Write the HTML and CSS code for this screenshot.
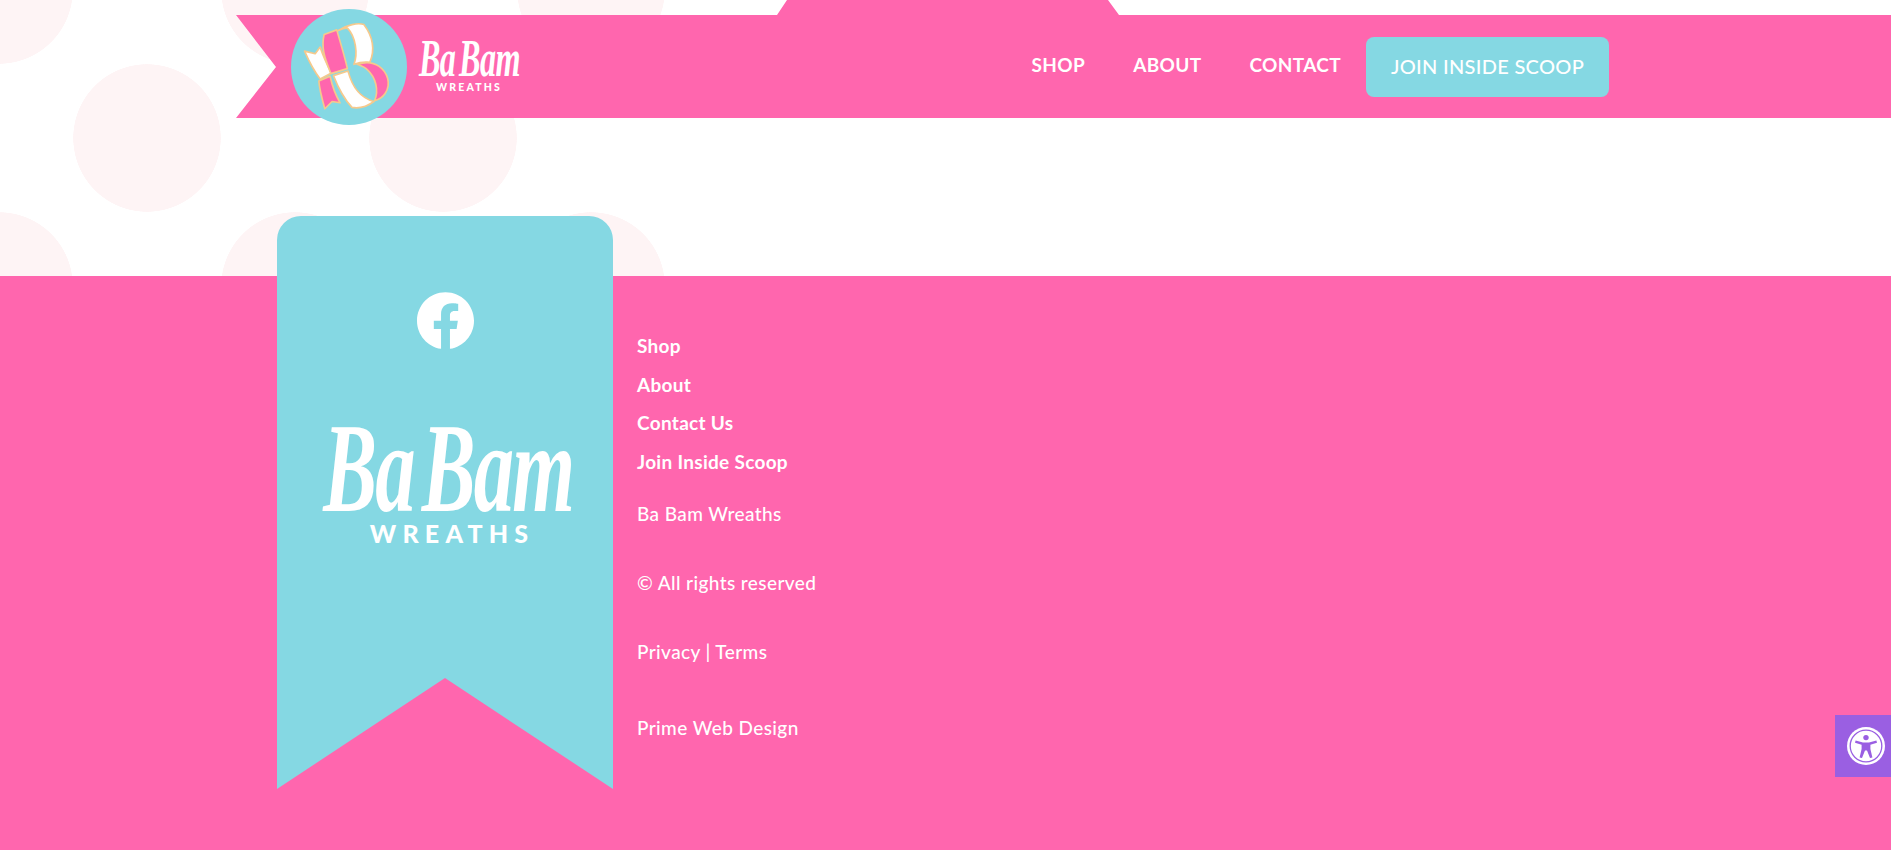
FILE: index.html
```html
<!DOCTYPE html>
<html lang="en">
<head>
  <meta charset="UTF-8" />
  <meta name="viewport" content="width=device-width, initial-scale=1.0"/>
  <title>Ba Bam Wreaths</title>
  <link rel="stylesheet" href="styles.css">
</head>
<body>

  <div class="top">
    <div class="dots"></div>

    <header class="header">
      <a class="brand" href="#">
        <svg class="brand-mark" viewBox="62 25 350 350" aria-hidden="true">
          <circle cx="237" cy="200" r="175" fill="#85d8e3"/>
          <g stroke="#f6c98c" stroke-width="5" stroke-linejoin="round">
            <path fill="#fff" d="M103 152 L135 160 L150 140 C160 170 172 195 184 218 L150 236 C130 210 115 180 103 152 Z"/>
            <path fill="#ff66ae" d="M162 102 L200 88 C212 130 226 175 232 205 L182 220 C172 190 150 150 162 102 Z"/>
            <path fill="#fff" d="M205 90 C230 72 265 66 282 72 C310 110 315 150 300 186 C285 184 268 186 252 192 C264 160 258 110 232 82 C224 82 212 86 205 90 Z"/>
            <path fill="#ff66ae" d="M262 192 C285 184 310 186 328 198 C352 215 366 250 346 280 C338 292 328 298 314 302 C328 270 318 232 292 208 C284 200 272 196 262 192 Z"/>
            <path fill="#fff" d="M190 226 L234 212 C244 250 262 290 312 304 C296 316 270 326 246 322 C222 296 204 262 190 226 Z"/>
            <path fill="#ff66ae" d="M146 242 L180 228 C186 256 196 284 210 308 L186 304 L164 326 C156 298 148 270 146 242 Z"/>
          </g>
        </svg>
        <span class="brand-text brand-text-small">
          <span class="brand-script">Ba Bam</span>
          <span class="brand-sub">WREATHS</span>
        </span>
      </a>

      <nav class="nav">
        <a href="#">SHOP</a>
        <a href="#">ABOUT</a>
        <a href="#">CONTACT</a>
        <a class="nav-btn" href="#">JOIN INSIDE SCOOP</a>
      </nav>
    </header>
  </div>

  <footer class="footer">
    <div class="ribbon">
      <a class="fb" href="#" aria-label="Facebook">
        <svg viewBox="0 0 24 24" fill="#fff" aria-hidden="true">
          <path d="M24 12.073c0-6.627-5.373-12-12-12s-12 5.373-12 12c0 5.99 4.388 10.954 10.125 11.854v-8.385H7.078v-3.47h3.047V9.43c0-3.007 1.792-4.669 4.533-4.669 1.312 0 2.686.235 2.686.235v2.953H15.83c-1.491 0-1.956.925-1.956 1.874v2.25h3.328l-.532 3.47h-2.796v8.385C19.612 23.027 24 18.062 24 12.073z"/>
        </svg>
      </a>
      <div class="brand-text brand-text-large">
        <span class="brand-script">Ba Bam</span>
        <span class="brand-sub">WREATHS</span>
      </div>
    </div>

    <div class="footer-info">
      <ul class="footer-links">
        <li><a href="#">Shop</a></li>
        <li><a href="#">About</a></li>
        <li><a href="#">Contact Us</a></li>
        <li><a href="#">Join Inside Scoop</a></li>
      </ul>
      <p class="footer-line">Ba Bam Wreaths</p>
      <p class="footer-line">© All rights reserved</p>
      <p class="footer-line">Privacy | Terms</p>
      <p class="footer-line footer-credit">Prime Web Design</p>
    </div>
  </footer>

  <button class="a11y" type="button" aria-label="Open toolbar">
    <svg viewBox="0 0 40 40" aria-hidden="true">
      <circle cx="20" cy="20" r="19" fill="#fff"/>
      <circle cx="20" cy="20" r="15.8" fill="none" stroke="#9a5fe2" stroke-width="1.3"/>
      <circle cx="20" cy="11.6" r="2.7" fill="#9a5fe2"/>
      <path fill="#9a5fe2" d="M9.6 14.6 L17 16.4 H23 L30.4 14.6 L31 16.8 L24.4 18.8 V23 L26.4 31.4 L24 32 L21 24.6 H19 L16 32 L13.6 31.4 L15.6 23 V18.8 L9 16.8 Z"/>
    </svg>
  </button>

</body>
</html>
```

FILE: styles.css
```css
* {
  box-sizing: border-box;
}

body {
  margin: 0;
  height: 850px;
  overflow: hidden;
  font-family: 'Lato', sans-serif;
  background-color: #fff;
  color: #fff;
}

a {
  color: inherit;
  text-decoration: none;
}

/* top area */
.top {
  position: relative;
  height: 276px;
}

.dots {
  position: absolute;
  top: 0;
  left: 0;
  width: 665px;
  height: 276px;
  background-image:
    radial-gradient(circle 74px at 148px 148px, #fef4f5 73.5px, transparent 74px),
    radial-gradient(circle 74px at 148px 148px, #fef4f5 73.5px, transparent 74px);
  background-size: 296px 296px;
  background-position: -1px -10px, -149px -158px;
}

.header {
  position: relative;
  display: flex;
  align-items: center;
  height: 118px;
  margin-left: 236px;
  padding: 15px 282px 0 55px;
}

.header::before {
  content: "";
  position: absolute;
  top: 0;
  left: 0;
  right: 0;
  bottom: 0;
  background-color: #ff66ae;
  clip-path: polygon(0 15px, 541px 15px, 551px 0, 872px 0, 883px 15px, 100% 15px, 100% 100%, 0 100%, 40px 67px);
}

.brand {
  position: relative;
  display: flex;
  align-items: center;
  gap: 11px;
}

.brand-mark {
  display: block;
  width: 116px;
  height: 116px;
}

.brand-text {
  display: flex;
  flex-direction: column;
  align-items: center;
}

.brand-script {
  font-family: 'Liberation Serif', serif;
  font-style: italic;
  font-weight: bold;
  white-space: nowrap;
  transform-origin: center;
}

.brand-sub {
  font-weight: 900;
}

.brand-text-small {
  width: 102px;
  margin-top: -4px;
}

.brand-text-small .brand-script {
  font-size: 52px;
  line-height: 46px;
  letter-spacing: -1px;
  word-spacing: -6px;
  transform: scaleX(.62);
}

.brand-text-small .brand-sub {
  font-size: 10.5px;
  line-height: 11px;
  letter-spacing: 2.2px;
}

.nav {
  position: relative;
  display: flex;
  align-items: center;
  margin-left: auto;
  font-size: 19px;
  font-weight: 700;
  letter-spacing: .35px;
}

.nav a {
  margin-right: 48px;
  padding-bottom: 4px;
}

.nav a.nav-btn {
  display: flex;
  align-items: center;
  justify-content: center;
  width: 243px;
  height: 60px;
  margin: 0 0 0 -23px;
  padding: 0 0 2px;
  background-color: #85d8e3;
  border-radius: 8px;
  font-size: 20px;
  font-weight: 500;
  letter-spacing: .3px;
}

/* footer */
.footer {
  display: flex;
  height: 574px;
  padding-left: 277px;
  background-color: #ff66ae;
}

.ribbon {
  display: flex;
  flex-direction: column;
  align-items: center;
  flex: none;
  width: 336px;
  height: 573px;
  margin-top: -60px;
  padding-top: 76px;
  background-color: #85d8e3;
  border-radius: 24px 24px 0 0;
  clip-path: polygon(0 0, 100% 0, 100% 100%, 50% 462px, 0 100%);
}

.fb {
  display: block;
  width: 57px;
  height: 57px;
}

.fb svg {
  display: block;
  width: 100%;
  height: 100%;
}

.brand-text-large {
  width: 250px;
  margin: 62px 0 0 6px;
}

.brand-text-large .brand-script {
  font-size: 128px;
  line-height: 114px;
  letter-spacing: -3px;
  word-spacing: -16px;
  transform: scaleX(.63);
}

.brand-text-large .brand-sub {
  margin: -5px 0 0 8px;
  font-size: 25px;
  line-height: 26px;
  letter-spacing: 6.2px;
}

.footer-info {
  margin-left: 24px;
  padding-top: 51px;
  font-size: 19px;
}

.footer-links {
  margin: 0 0 -2px;
  padding: 0;
  list-style: none;
  font-weight: 700;
  letter-spacing: .3px;
}

.footer-links li {
  line-height: 38.5px;
}

.footer-line {
  margin: 0;
  font-weight: 500;
  line-height: 69px;
  letter-spacing: .4px;
}

.footer-credit {
  margin-top: 7px;
}

/* accessibility toolbar button */
.a11y {
  position: fixed;
  top: 715px;
  right: 0;
  display: flex;
  align-items: center;
  justify-content: center;
  width: 56px;
  height: 62px;
  padding: 0 0 0 6px;
  background-color: #9a5fe2;
  border: none;
  cursor: pointer;
}

.a11y svg {
  display: block;
  flex: none;
  width: 40px;
  height: 40px;
}
```
